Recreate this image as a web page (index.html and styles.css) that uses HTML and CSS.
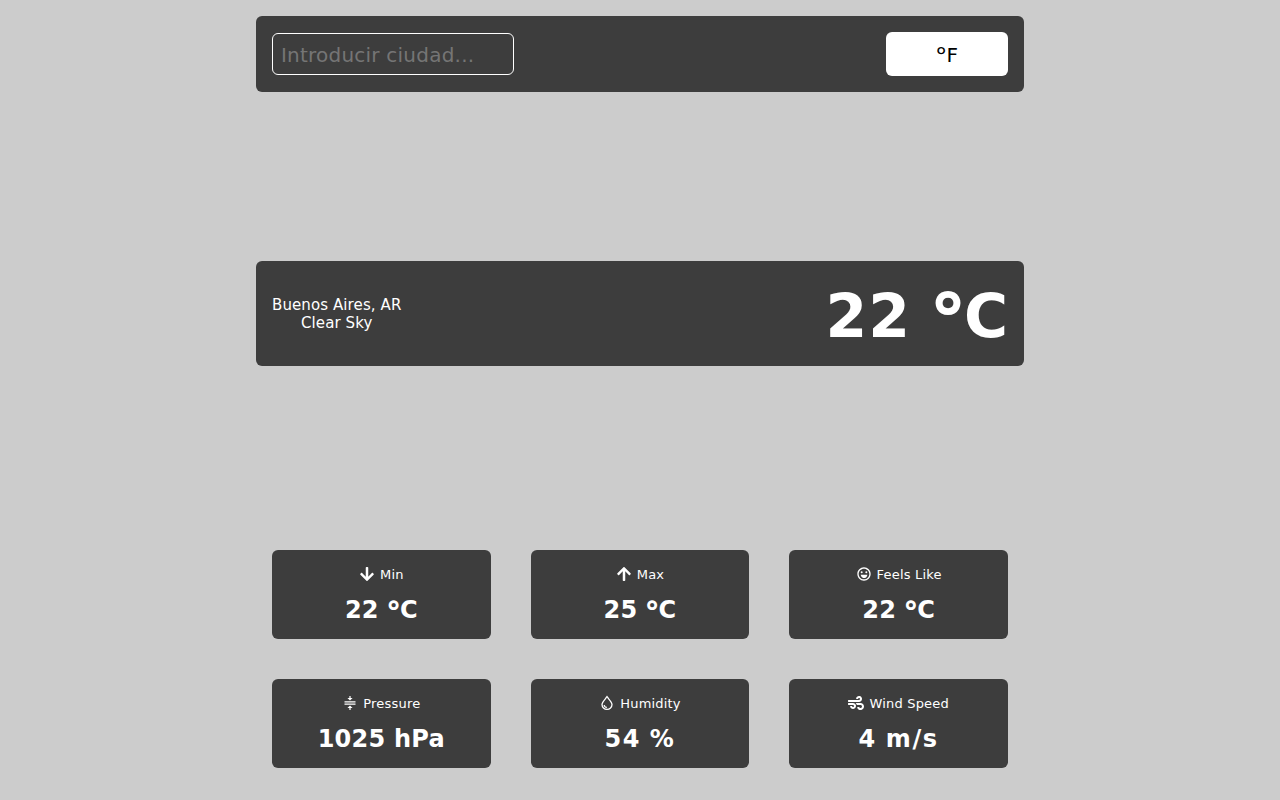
FILE: index.html
```html
<!DOCTYPE html>
<html lang="es">
<head>
<meta charset="utf-8">
<title>Clima</title>
<link rel="stylesheet" href="styles.css">
</head>
<body>
<main class="app">
  <header class="panel search">
    <input class="city-input" type="text" placeholder="Introducir ciudad...">
    <button class="unit-button"><span class="degree">°</span>F</button>
  </header>
  <section class="panel current">
    <div class="place"><p>Buenos Aires, AR</p><p>Clear Sky</p></div>
    <h1 class="temperature">22 <span class="degree">°</span>C</h1>
  </section>
  <section class="details">
    <article class="card">
      <div class="label"><svg class="icon" viewBox="0 0 448 512" fill="currentColor"><path d="M413.1 222.5l22.2 22.2c9.4 9.4 9.4 24.6 0 33.9L241 473c-9.4 9.4-24.6 9.4-33.9 0L12.7 278.6c-9.4-9.4-9.4-24.6 0-33.9l22.2-22.2c9.5-9.5 25-9.3 34.3.4L184 343.4V56c0-13.3 10.7-24 24-24h32c13.3 0 24 10.7 24 24v287.4l114.8-120.5c9.3-9.8 24.8-10 34.3-.4z"/></svg><small>Min</small></div>
      <h2 class="value">22 <span class="degree">°</span>C</h2>
    </article>
    <article class="card">
      <div class="label"><svg class="icon" viewBox="0 0 448 512" fill="currentColor"><path d="M34.9 289.5l-22.2-22.2c-9.4-9.4-9.4-24.6 0-33.9L207 39c9.4-9.4 24.6-9.4 33.9 0l194.3 194.3c9.4 9.4 9.4 24.6 0 33.9L413 289.4c-9.5 9.5-25 9.3-34.3-.4L264 168.6V456c0 13.3-10.7 24-24 24h-32c-13.3 0-24-10.7-24-24V168.600L69.200 289.100c-9.300 9.800-24.800 10-34.300.4z"/></svg><small>Max</small></div>
      <h2 class="value">25 <span class="degree">°</span>C</h2>
    </article>
    <article class="card">
      <div class="label"><svg class="icon" viewBox="0 0 24 24" fill="currentColor"><path d="M12 2C6.486 2 2 6.486 2 12s4.486 10 10 10 10-4.486 10-10S17.514 2 12 2zm0 18c-4.411 0-8-3.589-8-8s3.589-8 8-8 8 3.589 8 8-3.589 8-8 8z"/><circle cx="8.5" cy="9.5" r="1.5"/><circle cx="15.5" cy="9.5" r="1.5"/><path d="M12 18c4 0 5-4 5-5H7s1 5 5 5z"/></svg><small>Feels Like</small></div>
      <h2 class="value">22 <span class="degree">°</span>C</h2>
    </article>
    <article class="card">
      <div class="label"><svg class="icon" viewBox="0 0 16 16" fill="currentColor"><path d="M2.5 6.3h11v1.2h-11zM2.5 8.6h11v1.2h-11zM7.4 1h1.2v2h2L8 5.5 5.4 3h2zM7.4 15h1.2v-2h2L8 10.5 5.4 13h2z"/></svg><small>Pressure</small></div>
      <h2 class="value">1025 hPa</h2>
    </article>
    <article class="card">
      <div class="label"><svg class="icon" viewBox="0 0 16 16" fill="none" stroke="currentColor" stroke-width="1.3"><path d="M8 1.7C6.4 4 3 7 3 9.6a5 4.7 0 0 0 10 0C13 7 9.6 4 8 1.7z"/><path d="M5.2 10c.2 1.5 1.2 2.4 2.6 2.5"/></svg><small>Humidity</small></div>
      <h2 class="value value-percent">54 %</h2>
    </article>
    <article class="card">
      <div class="label"><svg class="icon" viewBox="0 0 512 512" fill="currentColor"><path d="M156.7 256H16c-8.8 0-16 7.2-16 16v32c0 8.8 7.2 16 16 16h142.2c15.9 0 30.8 10.9 33.4 26.6 3.3 20-12.1 37.4-31.6 37.4-14.1 0-26.1-9.2-30.4-21.9-2.1-6.3-8.6-10.1-15.2-10.1H81.6c-9.8 0-17.7 8.8-15.9 18.4 8.6 44.1 47.6 77.6 94.2 77.6 57.1 0 102.7-50.1 95.2-108.6C249 291 205.4 256 156.7 256zM16 224h336c59.7 0 106.8-54.8 93.8-116.7-7.6-36.2-36.9-65.5-73.1-73.1-55.4-11.6-105.1 24.9-114.9 75.5-1.9 9.6 6.1 18.3 15.8 18.3h32.8c6.7 0 13.1-3.8 15.2-10.1C325.9 105.2 337.9 96 352 96c19.4 0 34.9 17.4 31.6 37.4-2.6 15.7-17.4 26.6-33.4 26.6H16c-8.8 0-16 7.2-16 16v32c0 8.8 7.2 16 16 16zm384 32H243.7c19.3 16.6 33.2 38.8 39.8 64H400c26.5 0 48 21.5 48 48s-21.5 48-48 48c-17.9 0-33.3-9.9-41.6-24.4-2.9-5-8.7-7.6-14.5-7.6h-33.8c-10.9 0-19 10.8-15.3 21.1 17.8 50.6 70.5 84.8 129.4 72.3 41.2-8.7 75.1-41.6 84.7-82.7C526 321.5 470.5 256 400 256z"/></svg><small>Wind Speed</small></div>
      <h2 class="value value-speed">4 m/s</h2>
    </article>
  </section>
</main>
</body>
</html>
```
FILE: styles.css
```css
* {
  box-sizing: border-box;
  margin: 0;
  padding: 0;
}

body {
  background: #ccc;
  color: #fff;
  font-family: "DejaVu Sans", sans-serif;
  font-size: 15px;
}

.app {
  width: 768px;
  height: 100vh;
  margin: 0 auto;
  padding: 16px 0;
  display: flex;
  flex-direction: column;
  justify-content: space-between;
}

.panel {
  display: flex;
  justify-content: space-between;
  align-items: center;
  padding: 16px;
  border-radius: 6px;
  background: #3d3d3d;
}

.city-input {
  width: 242px;
  height: 42px;
  padding: 10px 8px 8px;
  border: 1px solid #fff;
  border-radius: 6px;
  background: transparent;
  color: #fff;
  font-family: inherit;
  font-size: 20px;
  letter-spacing: 0.22px;
}

.unit-button {
  width: 122px;
  height: 44px;
  padding-top: 2px;
  border: 0;
  border-radius: 6px;
  background: #fff;
  color: #000;
  font-family: inherit;
  font-size: 20px;
  line-height: 24px;
}

.degree {
  font-family: "Noto Sans", sans-serif;
  font-size: 1.2em;
  line-height: 0;
  vertical-align: -0.09em;
}

.place {
  padding-top: 1px;
  text-align: center;
  line-height: 18px;
  letter-spacing: 0.1px;
}

.temperature {
  height: 73px;
  padding-top: 3px;
  margin-right: -1px;
  font-size: 60px;
  line-height: 73px;
  letter-spacing: 0.9px;
}

.details {
  display: grid;
  grid-template-columns: repeat(3, 1fr);
  gap: 40px;
  padding: 16px;
}

.card {
  height: 89px;
  padding: 16px;
  border-radius: 6px;
  background: #3d3d3d;
  text-align: center;
}

.label {
  display: flex;
  justify-content: center;
  align-items: center;
  gap: 5px;
  height: 16px;
}

.label small {
  font-size: 13px;
  letter-spacing: 0.2px;
}

.icon {
  width: 16px;
  height: 16px;
}

.value {
  margin-top: 14px;
  font-size: 24px;
  line-height: 29px;
  letter-spacing: 0.25px;
}

.value-percent {
  letter-spacing: 1.5px;
  word-spacing: -1px;
}

.value-speed {
  letter-spacing: 1.6px;
  word-spacing: -1px;
}
```
